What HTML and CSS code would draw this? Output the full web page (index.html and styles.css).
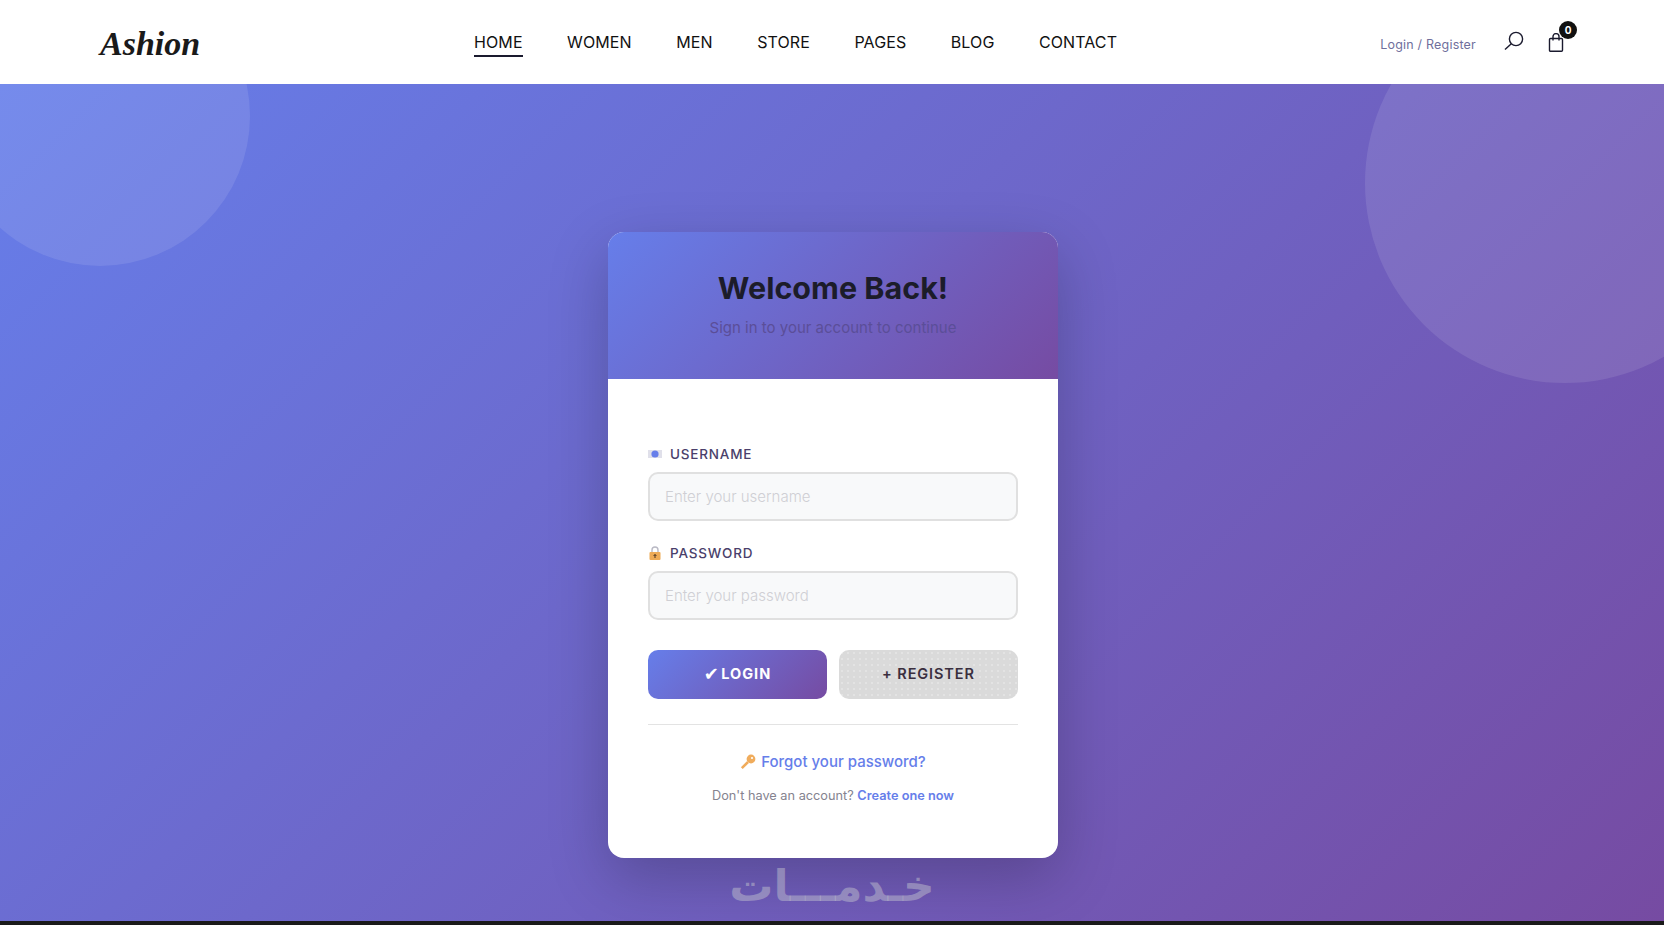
FILE: index.html
```html
<!DOCTYPE html>
<html lang="en">
<head>
    <meta charset="UTF-8">
    <meta name="viewport" content="width=device-width, initial-scale=1.0">
    <title>Ashion - Login</title>
    <link rel="stylesheet" href="styles.css">
</head>
<body>
    <header class="site-header">
        <a class="logo" href="#">Ashion</a>
        <nav class="main-nav">
            <a class="active" href="#">HOME</a>
            <a href="#">WOMEN</a>
            <a href="#">MEN</a>
            <a href="#">STORE</a>
            <a href="#">PAGES</a>
            <a href="#">BLOG</a>
            <a href="#">CONTACT</a>
        </nav>
        <div class="header-right">
            <a class="auth-link" href="#">Login / Register</a>
            <svg class="search-icon" viewBox="0 0 20 20" width="20" height="20" fill="none" stroke="#1a1a2e" stroke-width="1.4">
                <circle cx="12" cy="8" r="6.6"/>
                <path d="M7.3 12.7 1 18.6"/>
            </svg>
            <div class="cart">
                <svg viewBox="0 0 16 19" width="16" height="19" fill="none" stroke="#1a1a2e" stroke-width="1.4">
                    <rect x="1.5" y="5.5" width="13" height="12.8" rx="1"/>
                    <path d="M5 7.5V3.6a3 3 0 0 1 6 0v3.9"/>
                </svg>
                <span class="cart-badge">0</span>
            </div>
        </div>
    </header>

    <main class="hero">
        <div class="circle circle-left"></div>
        <div class="circle circle-right"></div>

        <div class="login-card">
            <div class="card-head">
                <h2>Welcome Back!</h2>
                <p>Sign in to your account to continue</p>
            </div>
            <form class="card-body">
                <div class="field">
                    <label for="username">
                        <svg viewBox="0 0 14 12" width="14" height="12">
                            <rect y="2" width="14" height="8" fill="#e0e0ea"/>
                            <circle cx="7" cy="6" r="3.6" fill="#667eea"/>
                        </svg>
                        USERNAME
                    </label>
                    <input type="text" id="username" placeholder="Enter your username">
                </div>
                <div class="field">
                    <label for="password">
                        <svg viewBox="0 0 14 14" width="14" height="14">
                            <path d="M4 7V4a3 3 0 0 1 6 0v3" fill="none" stroke="#b9b9c4" stroke-width="1.4"/>
                            <rect x="1.5" y="6" width="11" height="8" rx="1" fill="#eeaa55"/>
                            <path d="M7 8.5v3.5M5.6 10 7 8.5 8.4 10" fill="none" stroke="#4a3320" stroke-width="1"/>
                        </svg>
                        PASSWORD
                    </label>
                    <input type="password" id="password" placeholder="Enter your password">
                </div>
                <div class="button-row">
                    <button class="btn btn-login" type="button"><span class="check">✔</span> LOGIN</button>
                    <button class="btn btn-register" type="button">+ REGISTER</button>
                </div>
                <div class="card-links">
                    <a class="forgot" href="#">
                        <svg viewBox="0 0 16 16" width="16" height="16">
                            <circle cx="11" cy="5" r="4.4" fill="#f0ac5c"/>
                            <path d="M8 8 1.8 14.2" stroke="#f0ac5c" stroke-width="2.6"/>
                            <circle cx="12" cy="4" r="1.1" fill="#fff"/>
                        </svg>
                        Forgot your password?
                    </a>
                    <p>Don't have an account? <a href="#">Create one now</a></p>
                </div>
            </form>
        </div>

        <div class="watermark" lang="ar" dir="rtl">خـدمـــات</div>
    </main>
    <div class="bottom-strip"></div>
</body>
</html>
```

FILE: styles.css
```css
* {
    box-sizing: border-box;
    margin: 0;
    padding: 0;
}

html, body {
    height: 100%;
}

body {
    font-family: Inter, 'Open Sans', sans-serif;
    display: flex;
    flex-direction: column;
    overflow: hidden;
    background: #1a1a1a;
    color: #1a1a2e;
}

a {
    text-decoration: none;
    color: inherit;
}

/* header */
.site-header {
    height: 84px;
    flex-shrink: 0;
    display: grid;
    grid-template-columns: 374px auto 1fr;
    align-items: center;
    padding: 0 100px;
    background: #fff;
}

.logo {
    font-family: 'Liberation Serif', serif;
    font-style: italic;
    font-weight: 700;
    font-size: 34px;
    color: #1a1a1a;
    padding-top: 3px;
}

.main-nav {
    display: flex;
    gap: 44.5px;
    padding-top: 2px;
}

.main-nav a {
    font-size: 16px;
    font-weight: 400;
    color: #111;
    padding: 3px 0;
    border-bottom: 2px solid transparent;
    letter-spacing: 0.1px;
}

.main-nav a.active {
    border-bottom-color: #1a1a2e;
}

.header-right {
    display: flex;
    align-items: center;
    justify-content: flex-end;
    position: relative;
}

.auth-link {
    font-size: 12.5px;
    color: #6f6f9c;
    margin-right: 28px;
    margin-top: 5px;
    letter-spacing: 0.2px;
}

.search-icon {
    margin-right: 24px;
    margin-top: -3px;
}

.cart {
    position: relative;
    height: 19px;
}

.cart-badge {
    position: absolute;
    top: -12px;
    left: 11px;
    width: 18px;
    height: 18px;
    border-radius: 50%;
    background: #111;
    color: #fff;
    font-size: 10px;
    font-weight: 700;
    text-align: center;
    line-height: 18px;
}

/* main area */
.hero {
    flex: 1;
    position: relative;
    overflow: hidden;
    display: flex;
    justify-content: center;
    align-items: flex-start;
    padding-top: 148px;
    background: linear-gradient(135deg, #667eea 0%, #764ba2 100%);
}

.circle {
    position: absolute;
    border-radius: 50%;
    background: rgba(255, 255, 255, 0.1);
}

.circle-left {
    width: 300px;
    height: 300px;
    top: -118px;
    left: -50px;
}

.circle-right {
    width: 400px;
    height: 400px;
    top: -101px;
    right: -101px;
}

.login-card {
    width: 450px;
    height: 626px;
    margin-left: 2px;
    position: relative;
    background: #fff;
    border-radius: 16px;
    overflow: hidden;
    box-shadow: 0 20px 60px rgba(0, 0, 0, 0.22);
}

.card-head {
    height: 147px;
    padding-top: 38px;
    text-align: center;
    background: linear-gradient(135deg, #667eea 0%, #764ba2 100%);
}

.card-head h2 {
    font-size: 30.5px;
    line-height: 36px;
    font-weight: 700;
    color: #1c1c2a;
}

.card-head p {
    margin-top: 13px;
    font-size: 15px;
    line-height: 18px;
    color: #5b4e98;
}

.card-body {
    padding: 65px 40px 0;
}

.field {
    margin-bottom: 22px;
}

.field label {
    display: flex;
    align-items: center;
    gap: 8px;
    height: 20px;
    margin-bottom: 8px;
    font-size: 13.5px;
    font-weight: 500;
    letter-spacing: 0.8px;
    color: #4a3f6b;
}

.field input {
    display: block;
    width: 100%;
    height: 49px;
    padding: 0 15px 1px;
    border: 2px solid #e0e0e0;
    border-radius: 10px;
    outline: none;
    background: #f8f9fa;
    font-family: inherit;
    font-size: 15px;
    font-weight: 300;
}

.field input::placeholder {
    color: #cfcfd4;
}

.button-row {
    display: flex;
    gap: 12px;
    margin-top: 30px;
    padding-bottom: 25px;
    border-bottom: 1px solid #e3e3e3;
}

.btn {
    flex: 1;
    height: 49px;
    padding-bottom: 2px;
    border: none;
    border-radius: 10px;
    font-family: inherit;
    font-size: 14.5px;
    font-weight: 700;
    letter-spacing: 1px;
}

.check {
    font-family: 'DejaVu Sans', sans-serif;
    font-size: 18px;
    line-height: 1;
    margin-right: -3px;
    vertical-align: -1px;
}

.btn-login {
    background: linear-gradient(135deg, #667eea 0%, #764ba2 100%);
    color: #fff;
}

.btn-register {
    background: #dadada radial-gradient(circle, rgba(255, 255, 255, 0.35) 0.6px, transparent 1px) 0 0 / 6px 6px;
    color: #3a2f3f;
    font-weight: 600;
    letter-spacing: 0.9px;
}

.card-links {
    text-align: center;
    padding-top: 27px;
}

.forgot {
    display: inline-flex;
    align-items: center;
    gap: 5px;
    font-size: 15px;
    font-weight: 500;
    line-height: 20px;
    color: #667eea;
}

.card-links p {
    margin-top: 14px;
    font-size: 12.75px;
    line-height: 16px;
    color: #85838f;
}

.card-links p a {
    color: #667eea;
    font-weight: 600;
}

.watermark {
    position: absolute;
    left: 0;
    right: 0;
    top: 773px;
    text-align: center;
    font-family: 'DejaVu Sans', sans-serif;
    font-weight: 700;
    font-size: 44px;
    line-height: 58px;
    color: rgba(190, 190, 205, 0.5);
}

.bottom-strip {
    height: 4px;
    flex-shrink: 0;
    background: #1a1a1a;
}
```
